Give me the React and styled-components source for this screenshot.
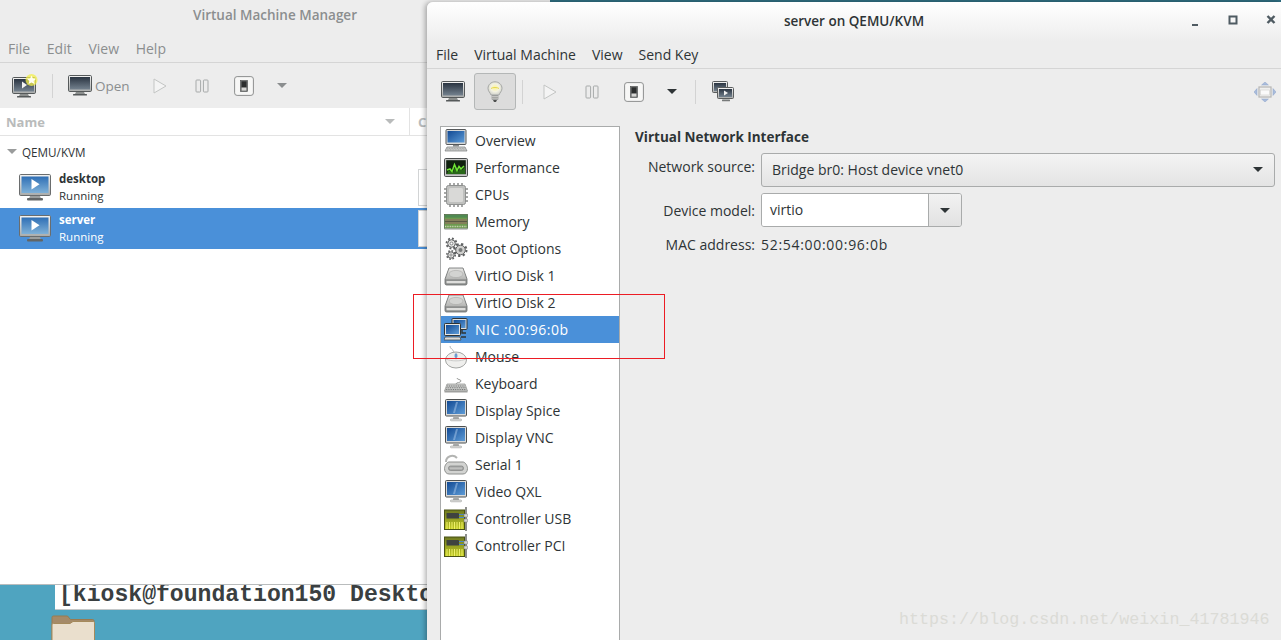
import React from 'react';
import styled, { createGlobalStyle } from 'styled-components';

const GlobalStyle = createGlobalStyle`
  html, body {
    margin: 0;
    padding: 0;
    background: #4fa4c0;
  }
  * { box-sizing: border-box; }
`;

const UI_FONT = `"Open Sans", "Noto Sans", sans-serif`;

/* gradients used by more than one icon */
function SharedGradients() {
  return (
    <svg width="0" height="0" style={{ position: 'absolute' }} aria-hidden="true">
      <defs>
        <linearGradient id="silver" x1="0" y1="0" x2="0" y2="1">
          <stop offset="0" stopColor="#f4f4f3" />
          <stop offset="1" stopColor="#a9abaa" />
        </linearGradient>
        <linearGradient id="blueScreen" x1="0" y1="0" x2="0" y2="1">
          <stop offset="0" stopColor="#2f6fb5" />
          <stop offset="1" stopColor="#7fb1d8" />
        </linearGradient>
        <linearGradient id="deepScreen" x1="0" y1="0" x2="1" y2="1">
          <stop offset="0" stopColor="#124a94" />
          <stop offset="1" stopColor="#5d9bd6" />
        </linearGradient>
        <linearGradient id="darkScreen" x1="0" y1="0" x2="0" y2="1">
          <stop offset="0" stopColor="#2a3441" />
          <stop offset="1" stopColor="#74828f" />
        </linearGradient>
        <linearGradient id="diskTop" x1="0" y1="0" x2="0" y2="1">
          <stop offset="0" stopColor="#e6e6e4" />
          <stop offset="1" stopColor="#b4b5b3" />
        </linearGradient>
        <linearGradient id="pcb" x1="0" y1="0" x2="0" y2="1">
          <stop offset="0" stopColor="#6d7820" />
          <stop offset="1" stopColor="#c6cf24" />
        </linearGradient>
        <radialGradient id="bulbGlass" cx="0.5" cy="0.45" r="0.6">
          <stop offset="0" stopColor="#fdf59a" />
          <stop offset="0.5" stopColor="#f3f2e2" />
          <stop offset="1" stopColor="#c9cbc8" />
        </radialGradient>
      </defs>
    </svg>
  );
}

const Glyph = ({ w = 24, h = 24, vb = '0 0 24 24', children }) => (
  <svg width={w} height={h} viewBox={vb} aria-hidden="true">
    {children}
  </svg>
);

/* toolbar icons */
const DarkMonitor = () => (
  <Glyph w={24} h={21} vb="0 0 24 21">
    <rect x="0.5" y="0.5" width="23" height="16" rx="1.2" fill="url(#silver)" stroke="#55595a" />
    <rect x="2" y="2" width="20" height="12.5" fill="url(#darkScreen)" />
    <path d="M8 17h8l1 2H7z" fill="#8b8e8d" />
    <rect x="5" y="19" width="14" height="1.6" rx=".6" fill="#55595a" />
  </Glyph>
);

const NewVmIcon = () => (
  <Glyph w={26} h={24} vb="0 0 26 24">
    <g transform="translate(0 3)">
      <rect x="0.5" y="0.5" width="23" height="16" rx="1.2" fill="url(#silver)" stroke="#55595a" />
      <rect x="2" y="2" width="20" height="12.5" fill="url(#darkScreen)" />
      <path d="M10 4.5l5 3.5-5 3.5z" fill="#f2f2f2" />
      <path d="M8 17h8l1 2H7z" fill="#8b8e8d" />
      <rect x="5" y="19" width="14" height="1.6" rx=".6" fill="#55595a" />
    </g>
    <circle cx="19.5" cy="6" r="6" fill="#f3ef4a" opacity=".75" />
    <path d="M19.5 1.4l1.4 3 3.2.4-2.4 2.1.7 3.2-2.9-1.7-2.9 1.7.7-3.2-2.4-2.1 3.2-.4z" fill="#fffdf0" />
  </Glyph>
);

const PlayIcon = () => (
  <Glyph w={14} h={16} vb="0 0 14 16">
    <path d="M1 1l12 7-12 7z" fill="#f4f4f4" stroke="#c3c5c4" strokeWidth="1" />
  </Glyph>
);

const PauseIcon = () => (
  <Glyph w={14} h={14} vb="0 0 14 14">
    <rect x="1" y="1" width="4.6" height="12" rx=".8" fill="#ececec" stroke="#a6a9a9" />
    <rect x="8.4" y="1" width="4.6" height="12" rx=".8" fill="#ececec" stroke="#a6a9a9" />
  </Glyph>
);

const PowerSwitchIcon = () => (
  <Glyph w={20} h={20} vb="0 0 20 20">
    <rect x="0.6" y="0.6" width="18.8" height="18.8" rx="2.5" fill="#f7f7f6" stroke="#8d8f8f" />
    <rect x="6.5" y="4.5" width="7" height="11" fill="#6a6c6c" stroke="#4a4c4c" strokeWidth=".6" />
    <rect x="7.6" y="5.4" width="4.8" height="6" fill="#2c2e2e" />
    <rect x="7.6" y="11.6" width="4.8" height="3" fill="#d7d7d5" />
  </Glyph>
);

const BulbIcon = () => (
  <Glyph w={16} h={22} vb="0 0 16 22">
    <path d="M8 .8c3.9 0 7 2.9 7 6.6 0 2.8-2.2 4.2-3 6.6H4c-.8-2.4-3-3.8-3-6.6C1 3.7 4.1.8 8 .8z" fill="url(#bulbGlass)" stroke="#a6a8a6" />
    <path d="M4 7.5c1.5-1.3 6.5-1.3 8 0" fill="none" stroke="#e7d84a" strokeWidth="1" />
    <rect x="4.6" y="14.2" width="6.8" height="4.6" rx=".8" fill="#8f9190" />
    <path d="M4.6 15.6h6.8M4.6 17.2h6.8" stroke="#e2e2e0" strokeWidth=".7" />
    <path d="M6 19h4l-1 2H7z" fill="#4f5150" />
  </Glyph>
);

const ScreensIcon = () => (
  <Glyph w={22} h={21} vb="0 0 22 21">
    <rect x="0.5" y="0.5" width="15" height="11" rx="1" fill="url(#silver)" stroke="#5a5d5e" />
    <rect x="2" y="2" width="12" height="8" fill="url(#darkScreen)" />
    <rect x="5.5" y="6.5" width="16" height="11" rx="1" fill="url(#silver)" stroke="#5a5d5e" />
    <rect x="7" y="8" width="13" height="8" fill="url(#darkScreen)" />
    <path d="M12 9.5l4 2.5-4 2.5z" fill="#f2f2f2" />
    <rect x="10" y="18.5" width="8" height="1.8" rx=".6" fill="#777a7a" />
  </Glyph>
);

const ResizeIcon = () => (
  <Glyph w={22} h={20} vb="0 0 22 20">
    <path d="M11 0l3.4 3h-6.8zM11 20l-3.4-3h6.8zM0 10l3-3.4v6.8zM22 10l-3-3.4v6.8z" fill="#a9bcdc" stroke="#8fa5cb" strokeWidth=".5" />
    <rect x="5" y="5" width="12" height="10" fill="#f0f0ef" stroke="#b5b5b3" strokeWidth="1.2" />
    <rect x="6.6" y="8" width="8.8" height="5" fill="#fafafa" stroke="#cfcfcd" strokeWidth=".6" />
  </Glyph>
);

/* virtual machine row icon */
const VmGlyph = () => (
  <Glyph w={32} h={27} vb="0 0 32 27">
    <rect x="0.5" y="0.5" width="31" height="21" rx="1.2" fill="url(#silver)" stroke="#6a6d6e" />
    <rect x="2.5" y="2.5" width="27" height="16.5" fill="url(#blueScreen)" />
    <path d="M12.5 5l8 5.2-8 5.2z" fill="#fff" />
    <path d="M11 22h10l1 2.4H10z" fill="#9b9e9d" />
    <rect x="8" y="24" width="16" height="2.4" rx="1" fill="#626565" />
  </Glyph>
);

/* hardware list icons */
const OverviewIcon = () => (
  <Glyph>
    <rect x="2" y="0.5" width="20" height="15" rx="1" fill="#d8d9d8" stroke="#55585a" />
    <rect x="3.5" y="2" width="17" height="11.5" fill="url(#deepScreen)" />
    <path d="M9 16h6v1.5H9z" fill="#888b8b" />
    <path d="M3 18h18l2 4H1z" fill="#d2d3d1" stroke="#77797a" strokeWidth=".7" />
    <path d="M3.4 19.5h17M2.8 20.8h18.4" stroke="#8a8c8c" strokeWidth=".6" strokeDasharray="1 .6" />
  </Glyph>
);

const PerformanceIcon = () => (
  <Glyph>
    <rect x="0.5" y="2.5" width="23" height="18" rx="1.2" fill="#c9cac9" stroke="#4a4d4e" />
    <rect x="2.2" y="4.2" width="19.6" height="14" fill="#10210f" />
    <path d="M3 18h18v-7l-3 3-2-2.5-2 4-2.5-6-2.5 7-2-2.5-3 1z" fill="#2f7a1c" opacity=".8" />
    <path d="M3 14l3-1 2 2.5 2.5-7 2.5 6 2-4 2 2.5 3-3" fill="none" stroke="#6fe634" strokeWidth="1.5" />
  </Glyph>
);

const CpuIcon = () => (
  <Glyph>
    <path d="M0 6h24M0 10h24M0 14h24M0 18h24M6 0v24M10 0v24M14 0v24M18 0v24" stroke="#8a8c8b" strokeWidth="1.5" />
    <rect x="2.5" y="2.5" width="19" height="19" rx="2" fill="#bfc0be" stroke="#8f9190" />
    <rect x="5" y="5" width="14" height="14" rx="1.5" fill="#d9d9d7" />
  </Glyph>
);

const MemoryIcon = () => (
  <Glyph>
    <rect x="0.5" y="4.5" width="23" height="14" fill="#6d9a4f" stroke="#4f6a46" strokeWidth=".8" />
    <rect x="1" y="5" width="22" height="2.6" fill="#4f8a52" />
    <rect x="1" y="9" width="22" height="5" fill="#84805a" />
    <path d="M1 11.5h22" stroke="#4e4e3e" strokeWidth=".8" />
    <path d="M1 16.5h22" stroke="#c9d6b4" strokeWidth="1.6" strokeDasharray="1 .7" />
    <rect x="0.5" y="18.5" width="23" height="1.5" fill="#c6c7c5" />
  </Glyph>
);

const GearIcon = () => (
  <Glyph>
    <g fill="#e4e4e2" stroke="#5e6061">
      <circle cx="7.5" cy="6.5" r="3.8" strokeWidth="1" />
      <circle cx="7.5" cy="6.5" r="5" fill="none" strokeWidth="1.8" strokeDasharray="1.9 2" />
      <circle cx="7" cy="18" r="3.2" strokeWidth="1" />
      <circle cx="7" cy="18" r="4.2" fill="none" strokeWidth="1.6" strokeDasharray="1.6 1.7" />
      <circle cx="16.5" cy="13" r="4.8" strokeWidth="1" fill="#cfcfcd" />
      <circle cx="16.5" cy="13" r="6" fill="none" strokeWidth="2" strokeDasharray="2.2 2.5" />
    </g>
    <circle cx="7.5" cy="6.5" r="1.4" fill="#fff" stroke="#5e6061" strokeWidth=".7" />
    <circle cx="7" cy="18" r="1.1" fill="#fff" stroke="#5e6061" strokeWidth=".7" />
    <circle cx="16.5" cy="13" r="2" fill="#777a7a" />
  </Glyph>
);

const DiskIcon = () => (
  <Glyph>
    <path d="M5 4h14l4 11v4.5c0 .8-.6 1.5-1.4 1.5H2.4c-.8 0-1.4-.7-1.4-1.5V15z" fill="#8e908f" stroke="#6b6d6d" strokeWidth=".8" />
    <path d="M5.3 4.4h13.4l3.8 10.8H1.5z" fill="url(#diskTop)" />
    <ellipse cx="12" cy="10" rx="7" ry="3.6" fill="#d2d3d1" stroke="#a9aaa8" strokeWidth=".6" />
    <rect x="2.5" y="17" width="19" height="2.2" rx=".6" fill="#dededc" />
  </Glyph>
);

const NicIcon = () => (
  <Glyph>
    <rect x="8" y="0.5" width="15" height="11" rx=".8" fill="#dcdddc" stroke="#2f3334" />
    <rect x="9.5" y="2" width="12" height="8" fill="url(#deepScreen)" />
    <rect x="0.5" y="5.5" width="16" height="12" rx=".8" fill="#e4e5e4" stroke="#2f3334" />
    <rect x="2" y="7" width="13" height="9" fill="url(#deepScreen)" />
    <path d="M1 19h15l1 3H0z" fill="#d8d9d8" stroke="#3b3f40" strokeWidth=".7" />
    <path d="M18 12v3h4M17 19h5" fill="none" stroke="#2f3334" strokeWidth="1.4" />
  </Glyph>
);

const MouseIcon = () => (
  <Glyph>
    <path d="M10 7C9 4 6 4 6 1" fill="none" stroke="#b7b8b6" strokeWidth="1" />
    <ellipse cx="12" cy="15" rx="10.5" ry="8" fill="#efefed" stroke="#a3a5a3" />
    <path d="M2 14c5 2.5 15 2.5 20 0" fill="none" stroke="#c2c3c1" strokeWidth=".8" />
    <path d="M12 7.5v7" stroke="#bfc0be" strokeWidth=".8" />
    <rect x="10.6" y="8.5" width="2.8" height="4.5" rx="1.4" fill="#6f9bcf" />
  </Glyph>
);

const KeyboardIcon = () => (
  <Glyph>
    <path d="M12 12c0-2 5-1 5-3s-4-1-4-3" fill="none" stroke="#9c9e9c" strokeWidth="1" />
    <path d="M3 12h18l2.5 7H.5z" fill="#cfd0ce" stroke="#8d8f8d" strokeWidth=".7" />
    <path d="M3.2 14h17.6M2.4 15.8h19.2M1.8 17.6h20.4" stroke="#6f7170" strokeWidth="1" strokeDasharray="1.1 .7" />
    <rect x="0.5" y="19" width="23" height="1.5" fill="#9fa09e" />
  </Glyph>
);

const DisplayIcon = () => (
  <Glyph>
    <rect x="1.5" y="0.5" width="21" height="16.5" rx="1" fill="#d9dad9" stroke="#4d5051" />
    <rect x="3" y="2" width="18" height="13" fill="url(#deepScreen)" />
    <path d="M12 3L9 14h2l3-11z" fill="#a9c8ea" opacity=".5" />
    <path d="M9.5 17h5l.6 3H8.9z" fill="#a7a9a8" />
    <rect x="6.5" y="20" width="11" height="1.8" rx=".6" fill="#e1e2e0" stroke="#8c8e8d" strokeWidth=".5" />
  </Glyph>
);

const SerialIcon = () => (
  <Glyph>
    <path d="M2 9C2 3 9 1 13 5" fill="none" stroke="#b3b4b2" strokeWidth="2" />
    <path d="M5 9h14c2 0 4.5 3.5 4.5 6.5 0 3.3-2 5.5-4.5 5.5H5C2.5 21 .5 18.8.5 15.5.5 12.5 3 9 5 9z" fill="#d2d3d1" stroke="#8e908e" />
    <rect x="4.5" y="13" width="15" height="4.5" rx="2" fill="#a9aaa9" stroke="#747675" strokeWidth=".6" />
    <path d="M6.5 15.2h11" stroke="#e9e9e8" strokeWidth="1" strokeDasharray="1 1" />
  </Glyph>
);

const ControllerIcon = () => (
  <Glyph>
    <rect x="0.5" y="3" width="20" height="19.5" fill="url(#pcb)" stroke="#4a5216" />
    <rect x="2.5" y="6" width="12.5" height="5.5" rx=".6" fill="#3f4340" />
    <path d="M15 7.5h5M15 10.5h5" stroke="#4a86c8" strokeWidth="1.2" />
    <path d="M3 15v7M5.5 15v7M8 15v7M10.5 15v7M13 15v7M15.5 15v7M18 15v7" stroke="#eef06a" strokeWidth="1" />
    <path d="M22 0v24" stroke="#8d8f8d" strokeWidth="2" />
    <rect x="20" y="7" width="3.5" height="3" fill="#d6d7d5" stroke="#767876" strokeWidth=".5" />
    <rect x="20" y="12" width="3.5" height="3" fill="#d6d7d5" stroke="#767876" strokeWidth=".5" />
  </Glyph>
);

const Desktop = styled.div`
  position: relative;
  width: 1281px;
  height: 640px;
  overflow: hidden;
  background: #4fa4c0;
  font-family: ${UI_FONT};
  font-size: 14px;
  color: #2e3436;
`;

const TopEdge = styled.div`
  position: absolute;
  top: 0;
  left: 550px;
  right: 0;
  height: 2px;
  background: #2f6d80;
`;

const Terminal = styled.div`
  position: absolute;
  top: 585px;
  left: 55px;
  width: 400px;
  height: 25px;
  padding-left: 4px;
  background: #fff;
  border-bottom: 1px solid #c4c8c9;
  font-family: "Liberation Mono", monospace;
  font-size: 23.1px;
  font-weight: 700;
  line-height: 21px;
  white-space: nowrap;
  color: #3a3f41;
`;

const FolderSpot = styled.div`
  position: absolute;
  top: 615px;
  left: 51px;
`;

const MainWindow = styled.section`
  position: absolute;
  top: 0;
  left: 0;
  width: 550px;
  height: 585px;
  display: flex;
  flex-direction: column;
  background: #ededed;
  border-bottom: 1px solid #b9bcbd;
`;

const DetailWindow = styled.section`
  position: absolute;
  top: 2px;
  left: 427px;
  right: 0;
  height: 660px;
  display: flex;
  flex-direction: column;
  background: #ededed;
  border-top-left-radius: 6px;
  box-shadow: -2px 0 5px rgba(0, 0, 0, 0.3);
`;

const TitleBar = styled.header`
  position: relative;
  display: flex;
  align-items: center;
  justify-content: center;
  height: ${(p) => p.$height}px;
  padding-bottom: ${(p) => p.$lift}px;
  font-size: 13.5px;
  font-weight: 600;
  color: ${(p) => (p.$active ? '#2e3436' : '#8b8e8f')};
  background: ${(p) => (p.$active ? 'linear-gradient(#ffffff, #ededed)' : '#ededed')};
  border-top-left-radius: inherit;
`;

const WindowControls = styled.div`
  position: absolute;
  top: 11px;
  right: 5px;
  display: flex;
  gap: 28px;
`;

const WindowControl = styled.span`
  display: flex;
  justify-content: center;
  width: 10px;
`;

const MenuBar = styled.nav`
  display: flex;
  align-items: center;
  gap: ${(p) => p.$gap}px;
  height: 27px;
  padding: 0 0 1px ${(p) => p.$inset}px;
  border-bottom: 1px solid #d5d5d5;
  color: ${(p) => (p.$muted ? '#8b8e8f' : '#2e3436')};
`;

const Toolbar = styled.div`
  display: flex;
  align-items: center;
  height: 45px;
  padding-left: ${(p) => p.$inset}px;
  flex: none;
`;

const ToolSlot = styled.span`
  display: flex;
  align-items: center;
  justify-content: center;
  flex: none;
  width: ${(p) => p.$width || 42}px;
  height: 37px;
  border-radius: 3px;
  border: 1px solid ${(p) => (p.$pressed ? '#b4b7b7' : 'transparent')};
  background: ${(p) => (p.$pressed ? '#dcdcdc' : 'transparent')};
`;

const OpenButton = styled.span`
  display: flex;
  align-items: center;
  gap: 3px;
  width: 80px;
  padding-left: 9px;
  font-size: 13.5px;
  color: #8b8e8f;
`;

const ToolSeparator = styled.i`
  flex: none;
  width: 1px;
  height: 24px;
  margin: 0 ${(p) => p.$space || 6}px;
  background: #d3d3d3;
`;

const Caret = styled.i`
  display: block;
  width: 0;
  height: 0;
  border-left: ${(p) => p.$size}px solid transparent;
  border-right: ${(p) => p.$size}px solid transparent;
  border-top: ${(p) => p.$size}px solid ${(p) => p.$color};
`;

const PushRight = styled.span`
  margin-left: auto;
`;

const ListPane = styled.div`
  flex: 1;
  background: #fff;
`;

const ListHead = styled.div`
  display: grid;
  grid-template-columns: 410px 1fr;
  height: 28px;
  border-bottom: 1px solid #e3e3e3;
  font-size: 13px;
  font-weight: 700;
  color: #b9bbbb;
`;

const HeadCell = styled.div`
  display: flex;
  align-items: center;
  justify-content: space-between;
  padding: 0 14px 0 ${(p) => (p.$divider ? 6 : 8)}px;
  border-right: ${(p) => (p.$divider ? '1px solid #e3e3e3' : 'none')};
`;

const GroupRow = styled.div`
  display: flex;
  align-items: center;
  gap: 5px;
  height: 31px;
  padding-left: 7px;
  font-size: 11.7px;
  color: #2e3436;
`;

const VmRow = styled.div`
  display: grid;
  grid-template-columns: 418px 1fr;
  align-items: center;
  height: 41px;
  background: ${(p) => (p.$selected ? '#4a90d9' : 'transparent')};
  color: ${(p) => (p.$selected ? '#fff' : '#2e3436')};
`;

const VmInfo = styled.div`
  display: flex;
  align-items: center;
  gap: 8px;
  padding-left: 19px;
`;

const VmText = styled.div`
  display: flex;
  flex-direction: column;
  gap: 2px;
  padding-bottom: 2px;
  font-size: 11.5px;
  line-height: 15px;
  b { font-weight: 700; }
`;

const CpuGraph = styled.div`
  height: 37px;
  background: #fff;
  border: 1px solid #d2d4d5;
`;

const DetailBody = styled.div`
  flex: 1;
  display: flex;
  padding: 12px 6px 0 13px;
  min-height: 0;
`;

const HardwareList = styled.ul`
  flex: none;
  width: 180px;
  margin: 0;
  padding: 0;
  list-style: none;
  background: #fff;
  border: 1px solid #a9abab;
  height: 600px;
`;

const HardwareRow = styled.li`
  display: flex;
  align-items: center;
  gap: 7px;
  height: 27px;
  padding-left: 3px;
  background: ${(p) => (p.$selected ? '#4a90d9' : 'transparent')};
  color: ${(p) => (p.$selected ? '#fff' : '#2e3436')};
  letter-spacing: ${(p) => (p.$selected ? '0.55px' : 'normal')};
`;

const Panel = styled.div`
  flex: 1;
  padding-left: 15px;
`;

const PanelHeading = styled.h2`
  margin: 0 0 5px;
  height: 22px;
  font-size: 13.5px;
  line-height: 22px;
  font-weight: 700;
  color: #2e3436;
`;

const FormGrid = styled.div`
  display: grid;
  grid-template-columns: 120px 1fr;
  column-gap: 6px;
  row-gap: 6px;
  align-items: center;
`;

const FieldLabel = styled.label`
  text-align: right;
  padding-bottom: ${(p) => (p.$raised ? 7 : 0)}px;
  padding-top: ${(p) => (p.$lowered ? 2 : 0)}px;
`;

const MacValue = styled.span`
  padding-top: 2px;
  letter-spacing: 0.7px;
`;

const SelectBox = styled.div`
  display: flex;
  align-items: center;
  justify-content: space-between;
  height: 34px;
  padding: 0 11px 2px 10px;
  background: linear-gradient(#f4f4f4, #e4e4e4);
  border: 1px solid #a9abab;
  border-radius: 3px;
`;

const ComboBox = styled.div`
  display: flex;
  width: 201px;
  height: 34px;
  border: 1px solid #a9abab;
  border-radius: 3px;
  overflow: hidden;
`;

const ComboValue = styled.div`
  flex: 1;
  display: flex;
  align-items: center;
  padding: 0 0 2px 8px;
  background: #fff;
`;

const ComboArrow = styled.div`
  display: flex;
  align-items: center;
  justify-content: center;
  width: 33px;
  background: linear-gradient(#f2f2f2, #e2e2e2);
  border-left: 1px solid #a9abab;
`;

const Annotation = styled.div`
  position: absolute;
  top: 294px;
  left: 413px;
  width: 252px;
  height: 65px;
  border: 1px solid #ec1c24;
  pointer-events: none;
`;

const Watermark = styled.div`
  position: absolute;
  top: 609px;
  left: 899px;
  font-family: "Liberation Mono", monospace;
  font-size: 16.7px;
  line-height: 22px;
  color: #dbdbd6;
  white-space: nowrap;
`;

const hardware = [
  ['Overview', OverviewIcon],
  ['Performance', PerformanceIcon],
  ['CPUs', CpuIcon],
  ['Memory', MemoryIcon],
  ['Boot Options', GearIcon],
  ['VirtIO Disk 1', DiskIcon],
  ['VirtIO Disk 2', DiskIcon],
  ['NIC :00:96:0b', NicIcon],
  ['Mouse', MouseIcon],
  ['Keyboard', KeyboardIcon],
  ['Display Spice', DisplayIcon],
  ['Display VNC', DisplayIcon],
  ['Serial 1', SerialIcon],
  ['Video QXL', DisplayIcon],
  ['Controller USB', ControllerIcon],
  ['Controller PCI', ControllerIcon],
];

const machines = [
  { name: 'desktop', state: 'Running' },
  { name: 'server', state: 'Running', selected: true },
];

export default function App() {
  return (
    <Desktop>
      <GlobalStyle />
      <SharedGradients />
      <TopEdge />

      <Terminal>[kiosk@foundation150 Desktop]$ virt-manager</Terminal>
      <FolderSpot>
        <svg width="44" height="26" viewBox="0 0 44 26" aria-hidden="true">
          <path d="M1 26V2.5C1 1.5 1.7 1 2.5 1h14l3 3.5h22c1 0 1.5.6 1.5 1.5v20z" fill="#a58a68" stroke="#9a7a4e" />
          <path d="M1 26V10c0-1 .7-1.5 1.500-1.5H19l3-2h20c1 0 1.5.6 1.5 1.5v18z" fill="#eadfcd" stroke="#a58a5c" />
        </svg>
      </FolderSpot>

      <MainWindow>
        <TitleBar $height={36} $lift={6}>Virtual Machine Manager</TitleBar>
        <MenuBar $inset={8} $gap={16.7} $muted>
          <span>File</span>
          <span>Edit</span>
          <span>View</span>
          <span>Help</span>
        </MenuBar>
        <Toolbar $inset={4}>
          <ToolSlot><NewVmIcon /></ToolSlot>
          <ToolSeparator />
          <OpenButton><DarkMonitor />Open</OpenButton>
          <ToolSlot><PlayIcon /></ToolSlot>
          <ToolSlot><PauseIcon /></ToolSlot>
          <ToolSlot><PowerSwitchIcon /></ToolSlot>
          <ToolSlot $width={34}><Caret $size={5} $color="#8b8e8f" /></ToolSlot>
        </Toolbar>
        <ListPane>
          <ListHead>
            <HeadCell $divider>
              Name
              <Caret $size={5} $color="#b9bbbb" />
            </HeadCell>
            <HeadCell>CPU usage</HeadCell>
          </ListHead>
          <GroupRow>
            <Caret $size={5} $color="#9a9c9c" />
            QEMU/KVM
          </GroupRow>
          {machines.map((vm) => (
            <VmRow key={vm.name} $selected={vm.selected}>
              <VmInfo>
                <VmGlyph />
                <VmText>
                  <b>{vm.name}</b>
                  <span>{vm.state}</span>
                </VmText>
              </VmInfo>
              <CpuGraph />
            </VmRow>
          ))}
        </ListPane>
      </MainWindow>

      <DetailWindow>
        <TitleBar $height={40} $lift={2} $active>
          server on QEMU/KVM
          <WindowControls>
            <WindowControl>
              <svg width="8" height="16" viewBox="0 0 8 16" aria-hidden="true"><rect x="1" y="11" width="6" height="2" fill="#4f5b62" /></svg>
            </WindowControl>
            <WindowControl>
              <svg width="10" height="16" viewBox="0 0 10 16" aria-hidden="true"><rect x="1.5" y="3.5" width="7" height="7" fill="none" stroke="#4f5b62" strokeWidth="2" /></svg>
            </WindowControl>
            <WindowControl>
              <svg width="10" height="16" viewBox="0 0 10 16" aria-hidden="true"><path d="M1.5 3l7 7M8.5 3l-7 7" stroke="#4f5b62" strokeWidth="2.4" /></svg>
            </WindowControl>
          </WindowControls>
        </TitleBar>
        <MenuBar $inset={9} $gap={16}>
          <span>File</span>
          <span>Virtual Machine</span>
          <span>View</span>
          <span>Send Key</span>
        </MenuBar>
        <Toolbar $inset={5}>
          <ToolSlot><DarkMonitor /></ToolSlot>
          <ToolSlot $pressed><BulbIcon /></ToolSlot>
          <ToolSeparator />
          <ToolSlot><PlayIcon /></ToolSlot>
          <ToolSlot><PauseIcon /></ToolSlot>
          <ToolSlot><PowerSwitchIcon /></ToolSlot>
          <ToolSlot $width={34}><Caret $size={5} $color="#2e3436" /></ToolSlot>
          <ToolSeparator />
          <ToolSlot><ScreensIcon /></ToolSlot>
          <PushRight />
          <ToolSlot $width={32}><ResizeIcon /></ToolSlot>
        </Toolbar>
        <DetailBody>
          <HardwareList>
            {hardware.map(([label, Icon]) => (
              <HardwareRow key={label} $selected={label.startsWith('NIC')}>
                <Icon />
                {label}
              </HardwareRow>
            ))}
          </HardwareList>
          <Panel>
            <PanelHeading>Virtual Network Interface</PanelHeading>
            <FormGrid>
              <FieldLabel $raised>Network source:</FieldLabel>
              <SelectBox>
                Bridge br0: Host device vnet0
                <Caret $size={5} $color="#2e3436" />
              </SelectBox>
              <FieldLabel>Device model:</FieldLabel>
              <ComboBox>
                <ComboValue>virtio</ComboValue>
                <ComboArrow><Caret $size={5} $color="#2e3436" /></ComboArrow>
              </ComboBox>
              <FieldLabel $lowered>MAC address:</FieldLabel>
              <MacValue>52:54:00:00:96:0b</MacValue>
            </FormGrid>
          </Panel>
        </DetailBody>
      </DetailWindow>

      <Annotation />
      <Watermark>https://blog.csdn.net/weixin_41781946</Watermark>
    </Desktop>
  );
}
